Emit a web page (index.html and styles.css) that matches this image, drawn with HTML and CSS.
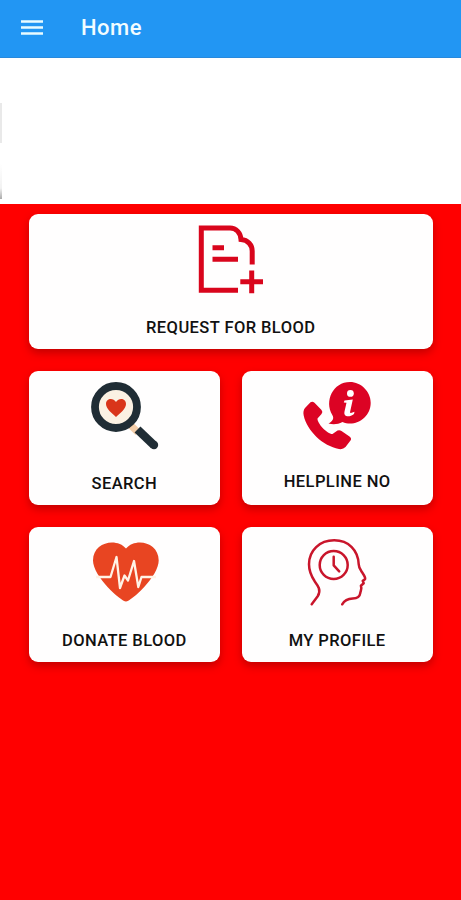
FILE: index.html
```
<!DOCTYPE html>
<html lang="en">
<head>
<meta charset="utf-8">
<title>Home</title>
<link rel="stylesheet" href="styles.css">
</head>
<body>
<header class="bar">
  <svg class="menu" viewBox="0 0 22 16"><path d="M0 1.500h22M0 7.500h22M0 13.500h22" stroke="#e9fbff" stroke-width="2.400"/></svg>
  <h1 class="title">Home</h1>
</header>
<section class="banner"><i class="edge"></i><i class="edge edge-low"></i></section>
<main class="grid">
  <div class="card wide">
    <svg class="icon" viewBox="181 222 100 80" fill="none" stroke="#d9051c" stroke-width="5">
      <path d="M238 290.200H201.300V228H230C236 228 240.500 232.500 241 239.500C248 240 252.200 245 252.200 251V264.500"/>
      <path d="M212.500 247.800H224M212.500 259.300H238M240.300 281.800H263M251.700 270.500V293.300"/>
    </svg>
    <span class="label">REQUEST FOR BLOOD</span>
  </div>
  <div class="card">
    <svg class="icon" viewBox="74 378.500 100 80">
      <path d="M130 424L138 432" stroke="#f3cda9" stroke-width="7"/>
      <path d="M137.500 429L154 444.800" stroke="#202d35" stroke-width="8.500"/>
      <circle cx="154" cy="444.500" r="4.200" fill="#202d35"/>
      <circle cx="116" cy="406.500" r="21" fill="#fbf1e3" stroke="#202d35" stroke-width="7.800"/>
      <path d="M116 416.500C112 412.500 106 408.500 106 403.500C106 397.800 113 396.700 116 401.500C119 396.700 126 397.800 126 403.500C126 408.500 120 412.500 116 416.500Z" fill="#d9351a"/>
    </svg>
    <span class="label">SEARCH</span>
  </div>
  <div class="card high">
    <svg class="icon" viewBox="287 379 100 80">
      <path d="M328.500 423.500C332.500 421.500 334.500 418.500 332.300 415C324 401 333 382 350 382C361 382 370.700 391.500 370.700 402.700C370.700 418 355 427.500 342.500 422C338 424.300 333.500 424.800 328.500 423.500Z" fill="#dc0324"/>
      <path d="M310.500 402.300Q312.500 401 314.500 402.800L321.500 410Q323.300 412 321.500 414L317.500 418.500C317 423 327 434 332.500 434L337.500 430.600Q339.500 429.500 341.500 431L349.500 436.500Q352 438.300 350.500 440.500L345.500 447Q343 449.700 339 449C323 446 307 431 303.700 415.500Q302.700 411 305 408Z" fill="#dc0324"/>
      <circle cx="350.400" cy="393.400" r="3.400" fill="#fff"/>
      <path d="M344.500 400.500L352.800 399.500L350 412.200Q350 413.800 354.500 411.800L354 414C349.500 417.500 343.200 417.200 344.500 411.500L346.500 402.800L343.800 402.600Z" fill="#fff"/>
    </svg>
    <span class="label">HELPLINE NO</span>
  </div>
  <div class="card">
    <svg class="icon" viewBox="74 534.500 100 80">
      <path d="M126 601C121 601 93 576 93 560C93 541 117 537 126 548C135 537 158.700 541 158.700 560C158.700 576 131 601 126 601Z" fill="#e84522"/>
      <path d="M96 576.500H110.500L116.500 556.500L120 587.500L124.500 575L128 580L134 560.500L138.300 586.500L141.500 576.500H156" fill="none" stroke="#fff3e6" stroke-width="2.300" stroke-linejoin="round"/>
    </svg>
    <span class="label">DONATE BLOOD</span>
  </div>
  <div class="card">
    <svg class="icon" viewBox="287.300 534.700 100 80" fill="none" stroke="#c9152b" stroke-width="2.500" stroke-linecap="round" stroke-linejoin="round">
      <path d="M312 604L318 596C322 590 318 585 315 581C311 575 309.300 570 309.300 564C309.300 550 320 540 334.500 540C349 540 358.500 550 359 564C359 568 361 570 363 573C365 576 366.500 578.500 364.500 579.500L363 580.500L364 583L361.200 585.500C362.500 588 361 590 360.500 593C360 597 357 598 353 598.200C348 598.500 344.500 600.500 342.500 604"/>
      <circle cx="334" cy="564.700" r="14"/>
      <path d="M334 556.500V565L339.500 571"/>
    </svg>
    <span class="label">MY PROFILE</span>
  </div>
</main>
</body>
</html>
```
FILE: styles.css
```
body {
  margin: 0;
  height: 900px;
  overflow: hidden;
  display: flex;
  flex-direction: column;
  background: #f00;
  font-family: Roboto, "Liberation Sans", sans-serif;
}

.bar {
  display: flex;
  align-items: center;
  gap: 38px;
  height: 58px;
  padding: 0 21px 2px;
  box-sizing: border-box;
  background: #2296f3;
  border-bottom: 1px solid #2889dc;
}

.menu {
  width: 22px;
  height: 16px;
}

.title {
  margin: 0;
  color: #f2fcff;
  font-size: 22px;
  font-weight: 500;
  letter-spacing: 0.500px;
}

.banner {
  height: 145.500px;
  padding-top: 45px;
  box-sizing: border-box;
  background: #fff;
}

.edge {
  display: block;
  width: 2px;
  height: 40px;
  background: #e9e9e9;
}

.edge-low {
  height: 36px;
  margin-top: 20px;
  background: linear-gradient(#fff, #f2f2f2 70%, #aaa);
}

.grid {
  display: grid;
  grid-template-columns: 1fr 1fr;
  grid-auto-rows: 134.500px;
  gap: 22px;
  padding: 10.500px 28.500px 0 29px;
}

.card {
  display: flex;
  flex-direction: column;
  align-items: center;
  gap: 15.500px;
  padding-top: 8px;
  box-sizing: border-box;
  border-radius: 9px;
  background: #fffefe;
  box-shadow: 0 4px 8px rgba(80, 0, 0, 0.350);
}

.wide {
  grid-column: 1 / -1;
}

.high {
  gap: 13.500px;
}

.icon {
  width: 100px;
  height: 80px;
}

.label {
  color: #111;
  font-size: 16.500px;
  font-weight: 500;
  line-height: 20px;
  letter-spacing: 0.420px;
  white-space: nowrap;
}
```
